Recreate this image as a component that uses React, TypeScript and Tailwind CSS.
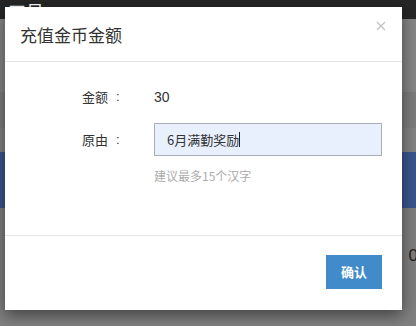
const cjk = '[font-family:"Noto_Sans_CJK_SC","Liberation_Sans",sans-serif]'

const Backdrop = () => {
  return (
    <div className="flex flex-col w-full h-full">
      <div className="h-[19px] bg-[#262626] text-white text-[18px] leading-[22px] pl-[8px] overflow-hidden font-['Noto_Sans_CJK_SC',sans-serif]">
        工号
      </div>
      <div className="h-[73px] bg-[#868686]"></div>
      <div className="h-[36px] bg-[#7d7d7d]"></div>
      <div className="h-[24px] bg-[#838383]"></div>
      <div className="h-[56px] bg-[#3a5690]"></div>
      <div className="flex-1 bg-[#808080] flex justify-end">
        <div className="mt-[35px] mr-[-2px] text-[17px] text-[#222] font-['Liberation_Sans',sans-serif]">
          0
        </div>
      </div>
    </div>
  )
}

const Label = ({ text }: any) => {
  return (
    <div className="ml-[77px] w-[72px] flex">
      <span>{text}</span>
      <span className="ml-[8px] font-['Liberation_Sans',sans-serif]">:</span>
    </div>
  )
}

export default function App() {
  return (
    <div className="relative w-[416px] h-[326px] overflow-hidden">
      <Backdrop />
      <div
        className={`absolute left-[5px] top-[7px] w-[397px] h-[303px] bg-white flex flex-col shadow-[0_5px_15px_rgba(0,0,0,0.5)] ${cjk}`}
      >
        <div className="relative h-[55px] border-b border-[#e5e5e5] flex items-center pl-[15px]">
          <div className="text-[17px] text-[#333] mt-[2px]">充值金币金额</div>
          <svg
            className="absolute right-[16px] top-[14px]"
            width="10"
            height="10"
            viewBox="0 0 10 10"
            stroke="#c4c4c4"
            strokeWidth="1.4"
          >
            <path d="M1 1 9 9M9 1 1 9" />
          </svg>
        </div>

        <div className="flex-1 pt-[25px] text-[13px] text-[#333]">
          <div className="flex h-[20px] items-center">
            <Label text="金额" />
            <div className="font-['Liberation_Sans','Noto_Sans_CJK_SC',sans-serif] text-[14px]">30</div>
          </div>
          <div className="flex items-center mt-[16px]">
            <Label text="原由" />
            <div className="w-[228px] h-[33px] border border-[#a9aeb6] bg-[#e8f0fe] flex items-center pl-[12px]">
              <span>6月满勤奖励</span>
              <span className="w-[1px] h-[15px] bg-[#222]"></span>
            </div>
          </div>
          <div className="ml-[149px] mt-[11px] text-[12px] leading-[18px] text-[#acacac]">
            建议最多15个汉字
          </div>
        </div>

        <div className="h-[75px] border-t border-[#e5e5e5] flex justify-end items-start pt-[19px] pr-[20px]">
          <div className="w-[56px] h-[34px] bg-[#428bca] text-white text-[13px] font-bold flex items-center justify-center">
            确认
          </div>
        </div>
      </div>
    </div>
  )
}
